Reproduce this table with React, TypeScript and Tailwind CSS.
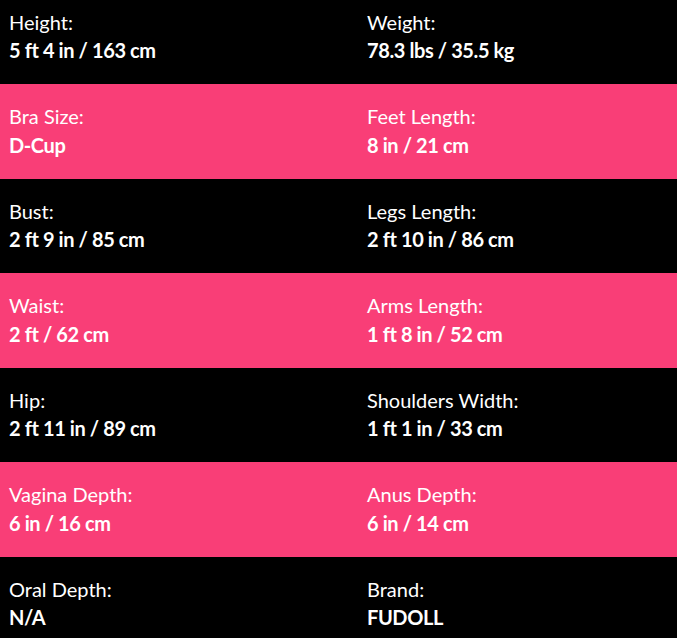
import React from 'react';

const specs: [string, string][][] = [
  [['Height:', '5 ft 4 in / 163 cm'], ['Weight:', '78.3 lbs / 35.5 kg']],
  [['Bra Size:', 'D-Cup'], ['Feet Length:', '8 in / 21 cm']],
  [['Bust:', '2 ft 9 in / 85 cm'], ['Legs Length:', '2 ft 10 in / 86 cm']],
  [['Waist:', '2 ft / 62 cm'], ['Arms Length:', '1 ft 8 in / 52 cm']],
  [['Hip:', '2 ft 11 in / 89 cm'], ['Shoulders Width:', '1 ft 1 in / 33 cm']],
  [['Vagina Depth:', '6 in / 16 cm'], ['Anus Depth:', '6 in / 14 cm']],
  [['Oral Depth:', 'N/A'], ['Brand:', 'FUDOLL']],
];

export default function App() {
  return (
    <div className="w-[677px] h-[638px] overflow-hidden bg-black font-['Lato','Noto_Sans',sans-serif] text-white">
      <div className="-mt-[10.4px]">
        {specs.map((row, i) => (
          <div
            key={i}
            className={
              i % 2 === 1
                ? 'grid grid-cols-[358px_1fr] h-[94.5px] pl-[9px] pt-[20px] bg-[#f93e77]'
                : 'grid grid-cols-[358px_1fr] h-[94.5px] pl-[9px] pt-[20px] bg-black'
            }
          >
            {row.map(([label, value]) => (
              <SpecItem key={label} label={label} value={value} />
            ))}
          </div>
        ))}
      </div>
    </div>
  );
}

function SpecItem({ label, value }: { label: string; value: string }) {
  return (
    <div>
      <p className="text-[20px] leading-[24px] mb-[4.5px]">{label}</p>
      <p className="text-[20px] leading-[24px] font-bold tracking-[-0.4px]">{value}</p>
    </div>
  );
}
